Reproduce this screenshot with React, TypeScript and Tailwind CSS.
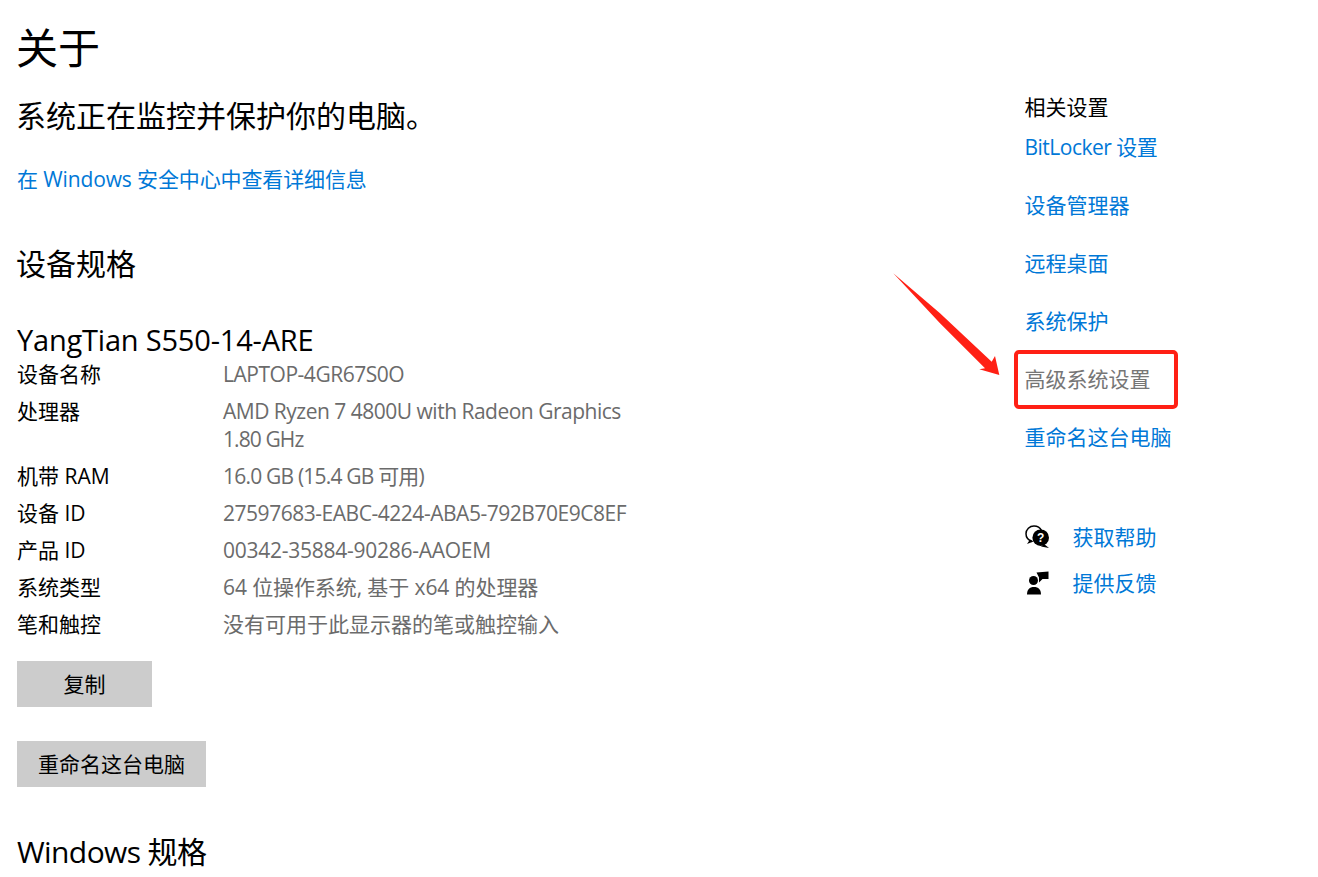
const specs: { label: string; values: [string, string][] }[] = [
  { label: '设备名称', values: [['LAPTOP-4GR67S0O', 'tracking-[-0.47px]']] },
  {
    label: '处理器',
    values: [
      ['AMD Ryzen 7 4800U with Radeon Graphics', 'tracking-[-0.5px]'],
      ['1.80 GHz', 'tracking-[-0.9px]'],
    ],
  },
  { label: '机带 RAM', values: [['16.0 GB (15.4 GB 可用)', 'tracking-[-0.8px]']] },
  { label: '设备 ID', values: [['27597683-EABC-4224-ABA5-792B70E9C8EF', 'tracking-[-0.47px]']] },
  { label: '产品 ID', values: [['00342-35884-90286-AAOEM', 'tracking-[-0.26px]']] },
  { label: '系统类型', values: [['64 位操作系统, 基于 x64 的处理器', 'tracking-[-0.1px]']] },
  { label: '笔和触控', values: [['没有可用于此显示器的笔或触控输入', '']] },
];

const links = ['BitLocker 设置', '设备管理器', '远程桌面', '系统保护', '高级系统设置', '重命名这台电脑'];

const linkClass = (l: string) => {
  if (l === '高级系统设置') return 'text-[21px] leading-[28px] text-[#767676]';
  if (l.startsWith('BitLocker')) return 'text-[21px] leading-[28px] tracking-[-0.5px] text-[#0078d7]';
  return 'text-[21px] leading-[28px] text-[#0078d7]';
};

const HelpIcon = () => (
  <svg width="26" height="24" viewBox="0 0 26 24" className="shrink-0">
    <path d="M7 16.500C3.500 15.200 1 12.500 1 8.800 1 4.300 4.600 1 9 1c3.500 0 6.200 1.800 7.400 4.400" fill="none" stroke="#000" strokeWidth="1.500" />
    <path d="M5 14.500L2 19l6.500-2.500z" fill="#000" />
    <circle cx="15.700" cy="12.700" r="8.300" fill="#000" />
    <path d="M19 19l5 4-8-1.500z" fill="#000" />
    <text x="15.700" y="17" textAnchor="middle" fontSize="12" fontWeight="700" fill="#fff" fontFamily="Liberation Sans, sans-serif">?</text>
  </svg>
);

const FeedbackIcon = () => (
  <svg width="22" height="24" viewBox="0 0 22 24" className="shrink-0">
    <circle cx="6.500" cy="9.500" r="4.500" fill="#000" />
    <path d="M0 23.500c0-5 2.500-7.500 7-7.500s7 2.500 7 7.500z" fill="#000" />
    <path d="M9.500 1.500L21.500 0.500V8H15.500L12 11.500V6.500z" fill="#000" />
  </svg>
);

const App = () => {
  return (
    <div
      className="relative w-[1318px] h-[877px] overflow-hidden bg-white flex text-black"
      style={{ fontFamily: '"Open Sans", "Noto Sans CJK SC", sans-serif' }}
    >
      <div className="w-[1024.5px] shrink-0 pl-[17px]">
        <h1 className="text-[42px] leading-[56px] mt-[20px] -ml-px font-normal">关于</h1>
        <p className="text-[30px] leading-[40px] mt-[20px] -ml-px">系统正在监控并保护你的电脑。</p>
        <a className="block text-[21px] leading-[28px] mt-[29px] tracking-[-0.12px] text-[#0078d7]">在 Windows 安全中心中查看详细信息</a>
        <h2 className="text-[30px] leading-[40px] mt-[51px] -ml-px">设备规格</h2>
        <h3 className="text-[29px] leading-[38px] mt-[37px] tracking-[-0.2px] font-normal">YangTian S550-14-ARE</h3>
        <div className="mt-px">
          {specs.map(({ label, values }) => (
            <div key={label} className="flex text-[21px] leading-[28px] mb-[9px]">
              <div className="w-[206px] shrink-0">{label}</div>
              <div className="text-[#6b6b6b]">
                {values.map(([v, tracking]) => (
                  <div key={v} className={tracking}>{v}</div>
                ))}
              </div>
            </div>
          ))}
        </div>
        <button className="block w-[135px] h-[46px] mt-[23px] pt-[2px] bg-[#cccccc] text-[21px]">复制</button>
        <button className="block w-[189px] h-[46px] mt-[34px] pt-[2px] bg-[#cccccc] text-[21px]">重命名这台电脑</button>
        <h2 className="text-[30px] leading-[40px] mt-[45px] tracking-[-0.6px]">Windows 规格</h2>
      </div>

      <div className="flex-1 pt-[93px]">
        <div className="text-[21px] leading-[28px]">相关设置</div>
        <div className="mt-[12px] flex flex-col gap-[30px]">
          {links.map(l => (
            <a key={l} className={linkClass(l)}>
              {l}
            </a>
          ))}
        </div>
        <div className="mt-[72px] flex items-center h-[28px]">
          <div className="w-[48px]"><HelpIcon /></div>
          <a className="text-[21px] leading-[28px] text-[#0078d7]">获取帮助</a>
        </div>
        <div className="mt-[18px] flex items-center h-[28px]">
          <div className="w-[48px] pl-[2px]"><FeedbackIcon /></div>
          <a className="text-[21px] leading-[28px] text-[#0078d7]">提供反馈</a>
        </div>
      </div>

      {/* annotation drawn over the screenshot */}
      <div className="absolute left-[1014px] top-[350px] w-[164px] h-[59px] border-[4px] border-[#ff2015] rounded-[5px]" />
      <svg className="absolute left-[890px] top-[268px]" width="115" height="112" viewBox="0 0 115 112">
        <path d="M3.300 5.300L50 45.300 101.700 93.700 105 88 109.300 107 89.300 101.300 95 100.300 50 55.300z" fill="#ff2015" />
      </svg>
    </div>
  );
};

export default App;
